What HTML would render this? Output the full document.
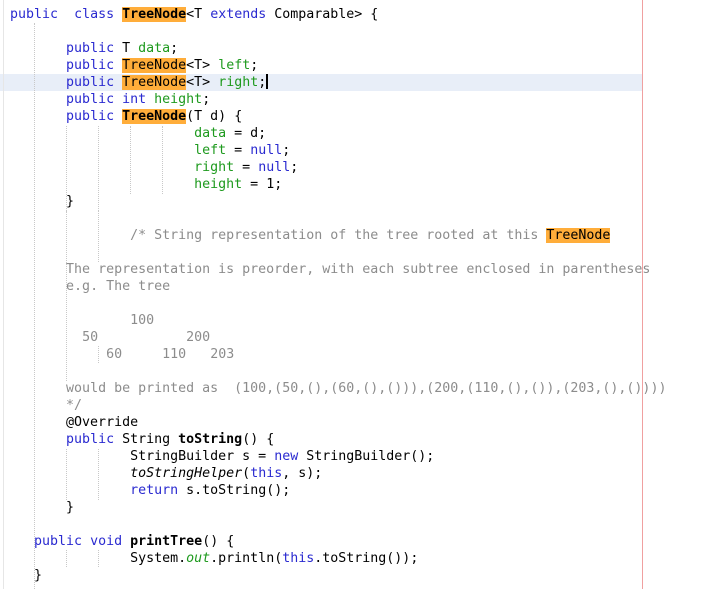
<!DOCTYPE html>
<html><head><style>
html,body{margin:0;padding:0;background:#fff;width:703px;height:589px;overflow:hidden;position:relative}
.c{position:absolute;left:10px;top:6px;font-family:"DejaVu Sans Mono","Liberation Mono",monospace;font-size:13.3px;line-height:17px;white-space:pre;color:#000}
.k{color:#2a2ad0}.f{color:#1e9a1e}.m{color:#8c8c8c}.h{background:#ffad3a}.b{font-weight:bold}.i{font-style:italic}
.hl{position:absolute;left:0;top:74px;width:642px;height:17px;background:#e8eef8}
.red{position:absolute;left:642px;top:0;width:1px;height:589px;background:#f0a0a0}
.g{position:absolute;width:0;border-left:1px dotted #c8c8c8}
.cur{display:inline-block;width:2px;height:15px;background:#000;vertical-align:-3px}
</style></head><body>
<div class="hl"></div>
<div class="g" style="left:3px;top:0;height:589px;border-left:1px solid #e6e6e6"></div>
<div class="g" style="left:34px;top:23px;height:566px"></div>
<div class="g" style="left:66px;top:126px;height:85px"></div>
<div class="g" style="left:98px;top:126px;height:85px"></div>
<div class="g" style="left:130px;top:126px;height:68px"></div>
<div class="g" style="left:162px;top:126px;height:68px"></div>
<div class="g" style="left:66px;top:211px;height:170px"></div>
<div class="g" style="left:98px;top:211px;height:51px"></div>
<div class="g" style="left:98px;top:346px;height:17px"></div>
<div class="g" style="left:66px;top:449px;height:51px"></div>
<div class="g" style="left:98px;top:449px;height:51px"></div>
<div class="g" style="left:66px;top:550px;height:17px"></div>
<div class="g" style="left:98px;top:550px;height:17px"></div>
<div class="red"></div>
<div class="c"><span class="k">public</span>  <span class="k">class</span> <span class="h b">TreeNode</span>&lt;T <span class="k">extends</span> Comparable&gt; {

       <span class="k">public</span> T <span class="f">data</span>;
       <span class="k">public</span> <span class="h">TreeNode</span>&lt;T&gt; <span class="f">left</span>;
       <span class="k">public</span> <span class="h">TreeNode</span>&lt;T&gt; <span class="f">right</span>;<span class="cur"></span>
       <span class="k">public</span> <span class="k">int</span> <span class="f">height</span>;
       <span class="k">public</span> <span class="h b">TreeNode</span>(T d) {
                       <span class="f">data</span> = d;
                       <span class="f">left</span> = <span class="k">null</span>;
                       <span class="f">right</span> = <span class="k">null</span>;
                       <span class="f">height</span> = 1;
       }

               <span class="m">/* String representation of the tree rooted at this </span><span class="h">TreeNode</span>

       <span class="m">The representation is preorder, with each subtree enclosed in parentheses</span>
       <span class="m">e.g. The tree</span>

               <span class="m">100</span>
         <span class="m">50</span>           <span class="m">200</span>
            <span class="m">60</span>     <span class="m">110</span>   <span class="m">203</span>

       <span class="m">would be printed as  (100,(50,(),(60,(),())),(200,(110,(),()),(203,(),())))</span>
       <span class="m">*/</span>
       @Override
       <span class="k">public</span> String <span class="b">toString</span>() {
               StringBuilder s = <span class="k">new</span> StringBuilder();
               <span class="i">toStringHelper</span>(<span class="k">this</span>, s);
               <span class="k">return</span> s.toString();
       }

   <span class="k">public</span> <span class="k">void</span> <span class="b">printTree</span>() {
               System.<span class="f i">out</span>.println(<span class="k">this</span>.toString());
   }</div>
</body></html>
